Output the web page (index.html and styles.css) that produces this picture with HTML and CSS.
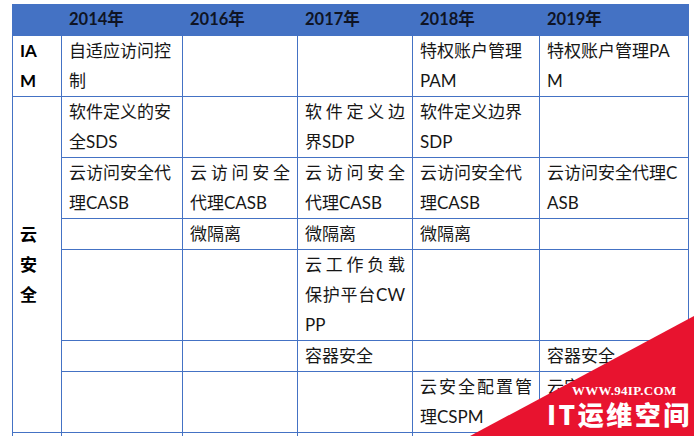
FILE: index.html
```html
<!DOCTYPE html>
<html lang="zh-CN">
<head>
<meta charset="utf-8">
<title>安全技术演进</title>
<link rel="stylesheet" href="styles.css">
</head>
<body>
<div class="sheet">
  <div class="grid">
    <div class="hd"></div>
    <div class="hd">2014年</div>
    <div class="hd">2016年</div>
    <div class="hd">2017年</div>
    <div class="hd">2018年</div>
    <div class="hd">2019年</div>

    <div class="side"><span class="ln">IA</span><span class="ln">M</span></div>
    <div class="cell"><span class="ln">自适应访问控</span><span class="ln">制</span></div>
    <div class="cell"></div>
    <div class="cell"></div>
    <div class="cell"><span class="ln">特权账户管理</span><span class="ln">PAM</span></div>
    <div class="cell"><span class="ln">特权账户管理PA</span><span class="ln">M</span></div>

    <div class="side span6"><span class="ln">云</span><span class="ln">安</span><span class="ln">全</span></div>
    <div class="cell"><span class="ln">软件定义的安</span><span class="ln">全SDS</span></div>
    <div class="cell"></div>
    <div class="cell"><span class="ln j">软件定义边</span><span class="ln">界SDP</span></div>
    <div class="cell"><span class="ln">软件定义边界</span><span class="ln">SDP</span></div>
    <div class="cell"></div>

    <div class="cell"><span class="ln">云访问安全代</span><span class="ln">理CASB</span></div>
    <div class="cell"><span class="ln j">云访问安全</span><span class="ln">代理CASB</span></div>
    <div class="cell"><span class="ln j">云访问安全</span><span class="ln">代理CASB</span></div>
    <div class="cell"><span class="ln">云访问安全代</span><span class="ln">理CASB</span></div>
    <div class="cell"><span class="ln">云访问安全代理C</span><span class="ln">ASB</span></div>

    <div class="cell"></div>
    <div class="cell"><span class="ln">微隔离</span></div>
    <div class="cell"><span class="ln">微隔离</span></div>
    <div class="cell"><span class="ln">微隔离</span></div>
    <div class="cell"></div>

    <div class="cell"></div>
    <div class="cell"></div>
    <div class="cell"><span class="ln j">云工作负载</span><span class="ln j">保护平台CW</span><span class="ln">PP</span></div>
    <div class="cell"></div>
    <div class="cell"></div>

    <div class="cell"></div>
    <div class="cell"></div>
    <div class="cell"><span class="ln">容器安全</span></div>
    <div class="cell"></div>
    <div class="cell"><span class="ln">容器安全</span></div>

    <div class="cell"></div>
    <div class="cell"></div>
    <div class="cell"></div>
    <div class="cell"><span class="ln j">云安全配置管</span><span class="ln">理CSPM</span></div>
    <div class="cell"><span class="ln">云安全</span></div>

    <div class="side"><span class="ln">&nbsp;</span></div>
    <div class="cell"></div>
    <div class="cell"></div>
    <div class="cell"></div>
    <div class="cell"></div>
    <div class="cell"></div>
  </div>

  <div class="wm">
    <div class="wm-url">WWW.94IP.COM</div>
    <div class="wm-name">IT运维空间</div>
  </div>
</div>
</body>
</html>
```

FILE: styles.css
```css
html, body {
  margin: 0;
  padding: 0;
  background: #ffffff;
  overflow: hidden;
}

.sheet {
  position: relative;
  width: 694px;
  height: 436px;
  overflow: hidden;
  padding: 4px 0 0 12px;
  box-sizing: border-box;
  font-family: Lato, "Noto Sans CJK SC", sans-serif;
  font-size: 17px;
  color: #161616;
}

.grid {
  display: grid;
  grid-template-columns: 49px 121px 115px 115px 127px 149px;
  border-left: 1px solid #4472c4;
  width: max-content;
}

.hd {
  background: #4472c4;
  border-right: 1px solid #4472c4;
  border-bottom: 1px solid #4472c4;
  line-height: 31px;
  padding: 0 7px;
  font-weight: 700;
  font-size: 16.5px;
  color: #0f1424;
}

.cell, .side {
  border-right: 1px solid #4472c4;
  border-bottom: 1px solid #4472c4;
  padding: 0 7px;
  line-height: 30px;
}

.side {
  font-weight: 700;
  color: #000;
  display: flex;
  flex-direction: column;
}

.span6 {
  grid-row: span 6;
  justify-content: center;
}

.ln {
  display: block;
  white-space: nowrap;
}

.j {
  text-align: justify;
  text-align-last: justify;
  white-space: normal;
}

.wm {
  position: absolute;
  left: 470px;
  top: 316px;
  width: 224px;
  height: 120px;
  background: #e8132f;
  clip-path: polygon(100% 0, 100% 100%, 0 100%);
  color: #ffffff;
}

.wm-url {
  position: absolute;
  left: 102px;
  top: 68px;
  font-family: "Liberation Serif", serif;
  font-weight: 700;
  font-size: 13px;
  line-height: 13px;
  letter-spacing: 0.3px;
}

.wm-name {
  position: absolute;
  left: 77px;
  top: 85px;
  font-family: "Noto Sans CJK SC", sans-serif;
  font-weight: 900;
  font-size: 26px;
  line-height: 26px;
  letter-spacing: 2.5px;
}
```
